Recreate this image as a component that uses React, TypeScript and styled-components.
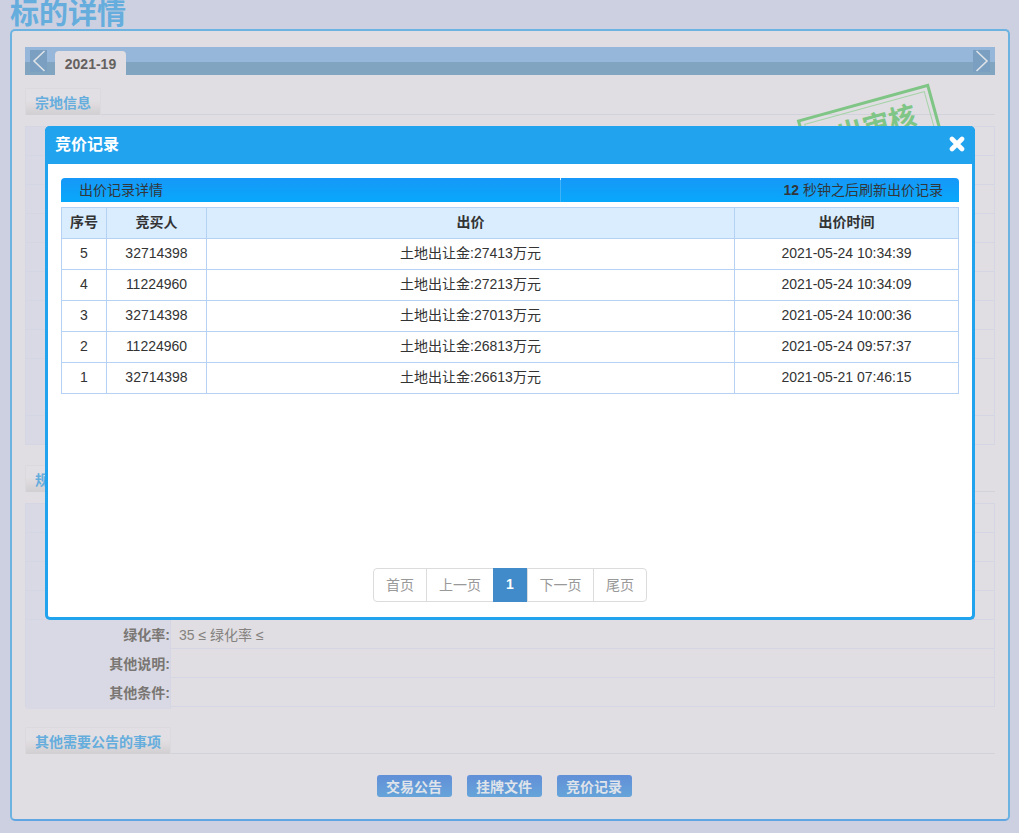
import React from "react";
import styled, { createGlobalStyle } from "styled-components";

const Global = createGlobalStyle`
  html, body { margin: 0; padding: 0; background: #cdd0e1; }
  body { font-family: "Liberation Sans", "Noto Sans CJK SC", sans-serif; font-size: 14px; color: #6b6b6f; }
  * { box-sizing: border-box; }
`;

const Page = styled.div`
  position: relative;
  width: 1019px;
  height: 833px;
  overflow: hidden;
  padding: 0 10px;
`;
const PageTitle = styled.h1`
  margin: 0;
  height: 29px;
  font-size: 29px;
  line-height: 29px;
  font-weight: bold;
  color: #65addd;
`;
const Panel = styled.div`
  width: 1000px;
  height: 792px;
  background: #e0dee2;
  border: 2px solid #6cb3e2;
  border-bottom-color: #5fa6e2;
  border-radius: 5px;
  padding: 16px 13px 0;
  position: relative;
`;
const TabBar = styled.div`
  height: 28px;
  display: flex;
  align-items: flex-end;
  justify-content: space-between;
  padding: 0 5px;
  background: linear-gradient(#96b7d9 0, #96b7d9 15px, #81a5c0 15px, #81a5c0 100%);
`;
const TabLeft = styled.div`
  display: flex;
  align-items: flex-end;
  gap: 8px;
`;
const Arrow = styled.div`
  width: 17px;
  height: 22px;
  margin-bottom: 3px;
  background: #7a9fc0;
  display: flex;
  align-items: center;
  justify-content: center;
`;
const Tab = styled.div`
  width: 71px;
  height: 24px;
  background: #e0dee2;
  border-radius: 4px 4px 0 0;
  text-align: center;
  font-size: 14px;
  line-height: 26px;
  font-weight: bold;
  color: #65615f;
`;
const SectionHead = styled.div<{ $top: number }>`
  height: 27px;
  margin-top: ${(p) => p.$top}px;
  border-bottom: 1px solid #d2d2da;
`;
const SectionLabel = styled.span`
  display: inline-block;
  height: 27px;
  padding: 0 9px;
  border: 1px solid #dbd9de;
  border-bottom: 0;
  border-radius: 2px 2px 0 0;
  background: linear-gradient(#e1dfe3 0, #e1dfe3 45%, #dedadd 60%, #d1cfd2 100%);
  font-size: 14px;
  line-height: 28px;
  font-weight: bold;
  color: #65addd;
  vertical-align: top;
`;
const Table = styled.div`
  margin-top: 11px;
  border: 1px solid #d5d6e3;
  border-bottom: 0;
`;
const Row = styled.div<{ $tall?: boolean }>`
  display: grid;
  grid-template-columns: 145px 1fr;
  height: ${(p) => (p.$tall ? 57 : 29)}px;
  border-bottom: 1px solid #d5d6e3;
`;
const Label = styled.div`
  background: #d8d9e4;
  border-right: 1px solid #d5d6e3;
  text-align: right;
  font-size: 14px;
  font-weight: bold;
  line-height: 31px;
  color: #7a7673;
`;
const Value = styled.div`
  padding-left: 8px;
  font-size: 14px;
  line-height: 31px;
  color: #85827f;
`;
const Actions = styled.div`
  display: flex;
  justify-content: center;
  gap: 15px;
  margin-top: 21px;
  padding-right: 12px;
`;
const ActionBtn = styled.div`
  width: 75px;
  height: 22px;
  border-radius: 3px;
  background: linear-gradient(#618fd8, #66a4d9);
  color: #dfe3ea;
  font-size: 14px;
  font-weight: bold;
  line-height: 24px;
  text-align: center;
`;
const Stamp = styled.div`
  position: absolute;
  left: 795px;
  top: 69px;
  width: 137px;
  height: 96px;
  border: 3px solid #7fc585;
  outline: 1px solid #a5d3a8;
  outline-offset: -7px;
  transform: rotate(-15.4deg);
  color: #7fc585;
  font-size: 27px;
  line-height: 30px;
  font-weight: bold;
  text-align: center;
  padding: 9px 0 0 14px;
`;
const Modal = styled.div`
  position: absolute;
  left: 45px;
  top: 126px;
  width: 930px;
  height: 494px;
  background: #fff;
  border: 3px solid #22a3ee;
  border-top: 0;
  border-radius: 5px;
`;
const ModalHead = styled.div`
  height: 38px;
  margin: 0 -3px;
  padding: 0 10px 3px 10px;
  background: #22a3ee;
  border-radius: 5px 5px 0 0;
  display: flex;
  align-items: center;
  justify-content: space-between;
  color: #fff;
  font-size: 16px;
  font-weight: bold;
`;
const ModalTitle = styled.span`
  padding-bottom: 2px;
`;
const ModalBody = styled.div`
  padding: 14px 13px 0;
  display: flex;
  flex-direction: column;
  height: 453px;
`;
const InfoBar = styled.div`
  height: 24px;
  display: grid;
  grid-template-columns: 500px 1fr;
  background: linear-gradient(#1698f8, #08a8fb);
  border-radius: 4px 4px 0 0;
  color: #33363a;
  font-size: 14px;
  line-height: 24px;
`;
const InfoLeft = styled.div`
  position: relative;
  padding-left: 18px;
  border-right: 1px solid #3fb3f6;
  &::after {
    content: "";
    position: absolute;
    right: -1px;
    top: 0;
    width: 1px;
    height: 2px;
    background: #d5effd;
  }
`;
const InfoRight = styled.div`
  text-align: right;
  padding-right: 16px;
  b { font-weight: bold; }
`;
const BidTable = styled.table`
  margin-top: 5px;
  width: 898px;
  border-collapse: collapse;
  table-layout: fixed;
  font-size: 14px;
  color: #333;
  th, td { border: 1px solid #b5d2f5; height: 31px; padding: 0 0 2px; text-align: center; line-height: 20px; }
  th { background: #d9edff; font-weight: bold; }
`;
const Pager = styled.div`
  margin-top: auto;
  margin-bottom: 15px;
  align-self: center;
  display: flex;
  height: 34px;
  border: 1px solid #dcdcdc;
  border-radius: 4px;
`;
const PageItem = styled.div<{ $w: number; $active?: boolean }>`
  width: ${(p) => p.$w}px;
  margin: ${(p) => (p.$active ? "-1px 0" : "0")};
  border-left: ${(p) => (p.$active ? "0" : "1px solid #dcdcdc")};
  background: ${(p) => (p.$active ? "#428bca" : "transparent")};
  color: ${(p) => (p.$active ? "#fff" : "#999")};
  font-weight: ${(p) => (p.$active ? "bold" : "normal")};
  line-height: 32px;
  text-align: center;
  font-size: 14px;
  &:first-child { border-left: 0; }
`;

const Chevron = ({ left }: { left?: boolean }) => (
  <svg width="14" height="22" viewBox="0 0 14 22">
    <path d={left ? "M12.5 1 L2 11 L12.5 21" : "M1.5 1 L12 11 L1.5 21"} fill="none" stroke="#dfe3e8" strokeWidth="1.6" />
  </svg>
);
const Close = () => (
  <svg width="16" height="16" viewBox="0 0 16 16">
    <path d="M3 3 L13 13 M13 3 L3 13" fill="none" stroke="#fff" strokeWidth="4.6" strokeLinecap="round" />
  </svg>
);

const bids = [
  ["5", "32714398", "27413", "2021-05-24 10:34:39"],
  ["4", "11224960", "27213", "2021-05-24 10:34:09"],
  ["3", "32714398", "27013", "2021-05-24 10:00:36"],
  ["2", "11224960", "26813", "2021-05-24 09:57:37"],
  ["1", "32714398", "26613", "2021-05-21 07:46:15"],
];

const blank = (n: number) => Array.from({ length: n }, (_, i) => i);

export default function App() {
  return (
    <Page>
      <Global />
      <PageTitle>标的详情</PageTitle>
      <Panel>
        <TabBar>
          <TabLeft>
            <Arrow><Chevron left /></Arrow>
            <Tab>2021-19</Tab>
          </TabLeft>
          <Arrow><Chevron /></Arrow>
        </TabBar>
        <SectionHead $top={13}><SectionLabel>宗地信息</SectionLabel></SectionHead>
        <Table>
          {blank(10).map((i) => (
            <Row key={i} $tall={i === 8}><Label /><Value /></Row>
          ))}
        </Table>
        <SectionHead $top={20}><SectionLabel>规划指标要求</SectionLabel></SectionHead>
        <Table>
          {blank(4).map((i) => (
            <Row key={i}><Label /><Value /></Row>
          ))}
          <Row><Label>绿化率:</Label><Value>35 ≤ 绿化率 ≤</Value></Row>
          <Row><Label>其他说明:</Label><Value /></Row>
          <Row><Label>其他条件:</Label><Value /></Row>
        </Table>
        <SectionHead $top={20}><SectionLabel>其他需要公告的事项</SectionLabel></SectionHead>
        <Actions>
          <ActionBtn>交易公告</ActionBtn>
          <ActionBtn>挂牌文件</ActionBtn>
          <ActionBtn>竞价记录</ActionBtn>
        </Actions>
        <Stamp>出审核</Stamp>
      </Panel>
      <Modal>
        <ModalHead><ModalTitle>竞价记录</ModalTitle><Close /></ModalHead>
        <ModalBody>
          <InfoBar>
            <InfoLeft>出价记录详情</InfoLeft>
            <InfoRight><b>12</b> 秒钟之后刷新出价记录</InfoRight>
          </InfoBar>
          <BidTable>
            <colgroup>
              <col style={{ width: 45 }} />
              <col style={{ width: 100 }} />
              <col style={{ width: 528 }} />
              <col />
            </colgroup>
            <thead>
              <tr><th>序号</th><th>竞买人</th><th>出价</th><th>出价时间</th></tr>
            </thead>
            <tbody>
              {bids.map((b) => (
                <tr key={b[0]}>
                  <td>{b[0]}</td>
                  <td>{b[1]}</td>
                  <td>土地出让金:{b[2]}万元</td>
                  <td>{b[3]}</td>
                </tr>
              ))}
            </tbody>
          </BidTable>
          <Pager>
            <PageItem $w={52}>首页</PageItem>
            <PageItem $w={67}>上一页</PageItem>
            <PageItem $w={34} $active>1</PageItem>
            <PageItem $w={66}>下一页</PageItem>
            <PageItem $w={53}>尾页</PageItem>
          </Pager>
        </ModalBody>
      </Modal>
    </Page>
  );
}
